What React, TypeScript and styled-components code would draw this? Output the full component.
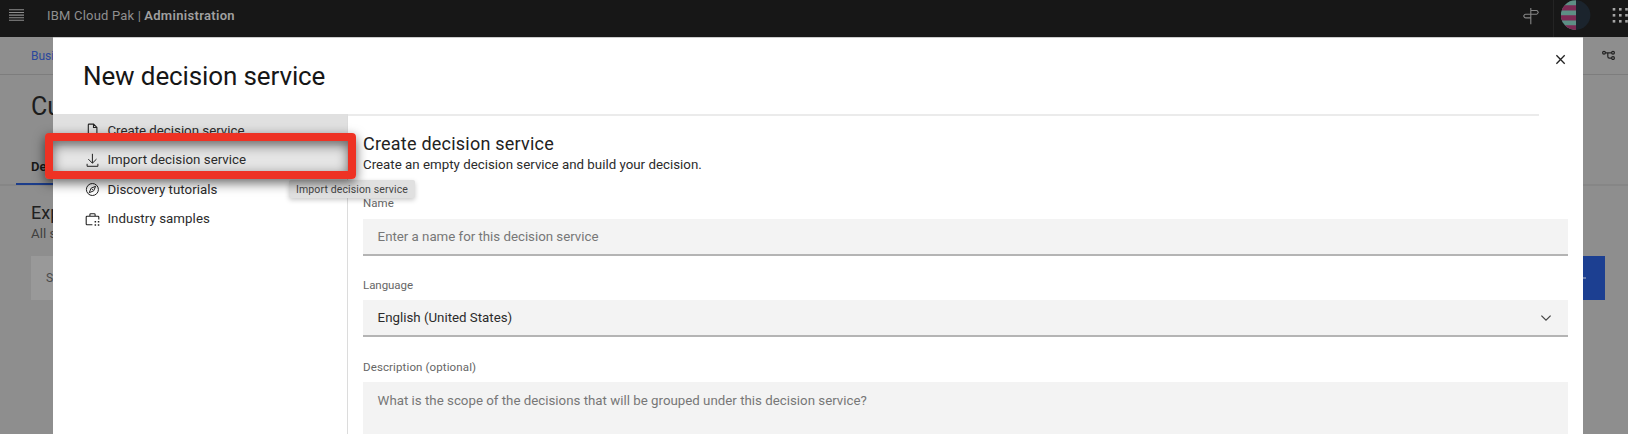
import React from "react";
import styled, { createGlobalStyle } from "styled-components";

const Global = createGlobalStyle`
  * { box-sizing: border-box; }
  html, body { margin: 0; padding: 0; }
  body { font-family: Roboto, "Liberation Sans", sans-serif; overflow: hidden; color: #161616; }
  svg { display: block; flex: none; }
  h1, h2, p { margin: 0; font-weight: 400; }
`;

const Text = styled.span<{ $size: number; $line: number; $gap?: number; $color?: string; $weight?: number }>`
  display: block;
  white-space: nowrap;
  font-size: ${(p) => p.$size}px;
  line-height: ${(p) => p.$line}px;
  letter-spacing: ${(p) => p.$gap ?? 0}px;
  color: ${(p) => p.$color ?? "#2b2b2b"};
  font-weight: ${(p) => p.$weight ?? 400};
`;

const Screen = styled.div`
  position: relative;
  display: flex;
  flex-direction: column;
  width: 1628px;
  height: 434px;
  overflow: hidden;
  background: #8e8e8e;
`;

const TopBar = styled.header`
  display: flex;
  align-items: flex-start;
  flex: none;
  height: 37px;
  background: #171717;
  padding-left: 9px;
`;

const Brand = styled.div`
  display: flex;
  gap: 3px;
  margin: 7px 0 0 23px;
`;

const TopActions = styled.div`
  display: flex;
  margin-left: auto;
  height: 37px;
`;

const Signpost = styled.div`
  padding: 8px 14px 0 0;
  border-right: 1px solid #242424;
`;

const Avatar = styled.div`
  padding-left: 7px;
  width: 58px;
`;

const Crumbs = styled.div`
  display: flex;
  justify-content: space-between;
  flex: none;
  height: 38px;
  padding: 9px 12px 0 31px;
  border-bottom: 1px solid #7d7d7d;
`;

const PageTitle = styled.div`
  flex: none;
  height: 111px;
  padding: 16px 0 0 31px;
  border-bottom: 2px solid #868686;
`;

const TabLabel = styled.div`
  width: 60px;
  height: 62px;
  margin: 0 0 0 -15px;
  padding: 35px 0 0 15px;
  border-bottom: 2px solid #1c3d8b;
`;

const Section = styled.div`
  padding: 15px 23px 0 31px;
`;

const SearchRow = styled.div`
  display: flex;
  justify-content: space-between;
  margin-top: 13px;
  height: 44px;
`;

const SearchBox = styled.div`
  width: 400px;
  padding: 13px 0 0 15px;
  background: #999;
`;

const CreateButton = styled.div`
  width: 80px;
  padding: 21px 19px 0 0;
  background: #1c3f91;
  display: flex;
  justify-content: flex-end;
`;

const Dialog = styled.section`
  position: absolute;
  left: 53px;
  top: 37px;
  width: 1530px;
  height: 397px;
  display: flex;
  flex-direction: column;
  background: #fff;
  border-top: 1px solid #ccc;
`;

const DialogHead = styled.div`
  display: flex;
  justify-content: space-between;
  flex: none;
  height: 76px;
  padding: 22px 17px 0 30px;
`;

const CloseWrap = styled.div`
  flex: none;
  margin-top: -6px;
`;

const DialogBody = styled.div`
  display: flex;
  flex: 1;
  min-height: 0;
`;

const Menu = styled.nav`
  flex: none;
  width: 295px;
  border-top: 2px solid #e0e0e0;
  border-right: 1px solid #dcdcdc;
`;

const MenuItem = styled.div<{ $tone?: string }>`
  display: flex;
  align-items: center;
  height: 29.5px;
  padding-left: 32px;
  gap: 7.4px;
  background: ${(p) => p.$tone ?? "transparent"};
`;

const Form = styled.div`
  flex: 1;
  padding: 0 15px;
`;

const Rule = styled.div`
  width: 1191px;
  height: 2px;
  margin: 0 0 16px -15px;
  background: #ebebeb;
`;

const Field = styled.div<{ $top: number }>`
  margin-top: ${(p) => p.$top}px;
`;

const Input = styled.div<{ $height: number; $pad?: number }>`
  display: flex;
  align-items: flex-start;
  justify-content: space-between;
  height: ${(p) => p.$height}px;
  margin-top: 8px;
  padding: ${(p) => p.$pad ?? 9}px 16px 0 14.6px;
  background: #f3f3f3;
  border-bottom: 2px solid #b4b4b4;
`;

const Highlight = styled.div`
  position: absolute;
  left: 45px;
  top: 133px;
  width: 311px;
  height: 46px;
  border: 8px solid #ee3224;
  border-radius: 4px;
  box-shadow: 0 4px 12px rgba(0, 0, 0, 0.6), inset 0 4px 12px rgba(0, 0, 0, 0.55);
`;

const Tooltip = styled.div`
  position: absolute;
  left: 289px;
  top: 180px;
  width: 126px;
  height: 18px;
  padding: 1px 0 0 7px;
  border-radius: 2px;
  background: #e0e0e0;
  box-shadow: 0 2px 5px rgba(0, 0, 0, 0.22);
`;

const MenuIcon = () => (
  <svg width="15" height="24" viewBox="0 0 15 24" fill="none" stroke="#8d8d8d" strokeWidth="1.1">
    <path d="M0 9.8h15M0 12.5h15M0 15.1h15M0 17.7h15M0 20.3h15" />
  </svg>
);

const SignpostIcon = () => (
  <svg width="16" height="17" viewBox="0 0 16 17" fill="none" stroke="#858585" strokeWidth="1.1">
    <path d="M7.8 0v16.3M8 2.5h5.6q1 0 1.7 1.9-.7 1.8-1.7 1.8H8M7.6 6.2H2.6q-1.2 0-1.9 1.8.7 1.9 1.9 1.9h5" />
  </svg>
);

const AvatarArt = () => (
  <svg width="30" height="31" viewBox="0 0 30 31">
    <clipPath id="disc"><circle cx="14.6" cy="15.1" r="14.8" /></clipPath>
    <g clipPath="url(#disc)">
      <path fill="#1b242d" d="M0 0h30v31H0z" />
      <path fill="#5d8f85" d="M0 0h15v31H0z" />
      <path fill="#7d2a55" d="M0 5.2h15v5.2H0zM0 15.2h15v5.2H0zM0 25.3h15v5.2H0z" />
    </g>
  </svg>
);

const GridDots = () => (
  <svg width="16" height="31" viewBox="0 0 16 31" fill="#a5a5a5">
    {[8, 14, 20].map((y) => [0.7, 7, 13.2].map((x) => <rect key={x + "-" + y} x={x} y={y} width="2.6" height="2.6" />))}
  </svg>
);

const FlowIcon = () => (
  <svg width="14" height="14" viewBox="0 0 14 14" fill="none" stroke="#222" strokeWidth="1.2">
    <circle cx="2" cy="6.8" r="1.4" /><circle cx="11" cy="6.8" r="1.4" /><circle cx="11" cy="12.1" r="1.4" />
    <path d="M3.4 6.8h6.2M5.8 6.8v3.6q0 1.7 1.7 1.7h2.1" />
  </svg>
);

const CloseIcon = () => (
  <svg width="11" height="12" viewBox="0 0 11 12" stroke="#222" strokeWidth="1.3" fill="none">
    <path d="M1.4 1.2l8.3 8.6M9.7 1.2L1.4 9.8" />
  </svg>
);

const icon = { width: 15, height: 15, viewBox: "0 0 15 15", fill: "none", stroke: "#222", strokeWidth: 1.1 };

const FileIcon = () => (
  <svg {...icon}><path d="M3.3 13.7V1.8q0-.7.7-.7h4.6l3.3 3.3v8.6q0 .7-.7.7H4q-.7 0-.7-.7M8.5 1.2v3.3h3.3" /></svg>
);
const ImportIcon = () => (
  <svg {...icon} strokeWidth={1}><path d="M7.4 .8v9.2M3.3 6.1l4.1 4.1 4.1-4.1M2.1 10.8v2.5h10.8v-2.5" /></svg>
);
const CompassIcon = () => (
  <svg {...icon} strokeWidth={1}>
    <circle cx="7.4" cy="7.5" r="6" />
    <path d="M10.6 4.3L6.1 6.2 4.2 10.7 8.7 8.8z" /><circle cx="7.4" cy="7.5" r=".6" fill="#222" stroke="none" />
  </svg>
);
const IndustryIcon = () => (
  <svg {...icon}>
    <path d="M7.4 12.7H2q-.8 0-.8-.8V5q0-.8.8-.8h11q.8 0 .8.8v2.4M4.9 4.1V2.5q0-.8.8-.8h3.6q.8 0 .8.8v1.6" />
    <path fill="#222" stroke="none" d="M9.6 9h1.5v1.5H9.6zM12.8 9h1.5v1.5h-1.5zM9.6 12.2h1.5v1.5H9.6zM12.8 12.2h1.5v1.5h-1.5z" />
  </svg>
);
const Chevron = () => (
  <svg width="12" height="18" viewBox="0 0 12 18" fill="none" stroke="#444" strokeWidth="1.2">
    <path d="M1.4 6.6L6 11.2l4.6-4.6" />
  </svg>
);

export default function App() {
  return (
    <Screen>
      <Global />
      <TopBar>
        <MenuIcon />
        <Brand>
          <Text $size={13} $line={18} $gap={0.2} $color="#8f8f8f">IBM Cloud Pak |</Text>
          <Text $size={13} $line={18} $gap={0.33} $color="#a0a0a0" $weight={600}>Administration</Text>
        </Brand>
        <TopActions>
          <Signpost><SignpostIcon /></Signpost>
          <Avatar><AvatarArt /></Avatar>
          <GridDots />
        </TopActions>
      </TopBar>
      <Crumbs>
        <Text $size={12} $line={20} $color="#2a489c">Busi</Text>
        <FlowIcon />
      </Crumbs>
      <PageTitle>
        <Text $size={25} $line={32} $color="#1c1c1c">Cu</Text>
        <TabLabel><Text $size={13} $line={18} $weight={600} $color="#171717">De</Text></TabLabel>
      </PageTitle>
      <Section>
        <Text $size={18} $line={24} $color="#202020">Exp</Text>
        <Text $size={13.3} $line={18} $color="#404040">All s</Text>
        <SearchRow>
          <SearchBox><Text $size={12} $line={18} $color="#4a4a4a">S</Text></SearchBox>
          <CreateButton>
            <svg width="9" height="2" viewBox="0 0 9 2"><path fill="#8a98bd" d="M0 .3h9v1.4H0z" /></svg>
          </CreateButton>
        </SearchRow>
      </Section>

      <Dialog>
        <DialogHead>
          <Text as="h1" $size={26} $line={32} $gap={-0.12} $color="#161616">New decision service</Text>
          <CloseWrap><CloseIcon /></CloseWrap>
        </DialogHead>
        <DialogBody>
          <Menu>
            <MenuItem $tone="#e0e0e0"><FileIcon /><Text $size={13.3} $line={18} $gap={-0.01}>Create decision service</Text></MenuItem>
            <MenuItem $tone="#e5e5e5"><ImportIcon /><Text $size={13.3} $line={18} $gap={0.03}>Import decision service</Text></MenuItem>
            <MenuItem><CompassIcon /><Text $size={13.3} $line={18} $gap={0.03}>Discovery tutorials</Text></MenuItem>
            <MenuItem><IndustryIcon /><Text $size={13.3} $line={18} $gap={0.06}>Industry samples</Text></MenuItem>
          </Menu>
          <Form>
            <Rule />
            <Text as="h2" $size={18} $line={24} $gap={0.22} $color="#222">Create decision service</Text>
            <Text as="p" $size={13.3} $line={18} $gap={0.01}>Create an empty decision service and build your decision.</Text>
            <Field $top={22}>
              <Text $size={11.5} $line={15} $gap={0.05} $color="#666">Name</Text>
              <Input $height={37}><Text $size={13.3} $line={18} $gap={-0.02} $color="#777">Enter a name for this decision service</Text></Input>
            </Field>
            <Field $top={22}>
              <Text $size={11.5} $line={14} $gap={-0.05} $color="#666">Language</Text>
              <Input $height={37}><Text $size={13.3} $line={18}>English (United States)</Text><Chevron /></Input>
            </Field>
            <Field $top={23}>
              <Text $size={11.5} $line={14} $gap={0.12} $color="#666">Description (optional)</Text>
              <Input $height={90} $pad={10}><Text $size={13.3} $line={18} $color="#777">What is the scope of the decisions that will be grouped under this decision service?</Text></Input>
            </Field>
          </Form>
        </DialogBody>
      </Dialog>
      <Tooltip><Text $size={10.5} $line={17} $gap={0.13} $color="#444">Import decision service</Text></Tooltip>
      <Highlight />
    </Screen>
  );
}
